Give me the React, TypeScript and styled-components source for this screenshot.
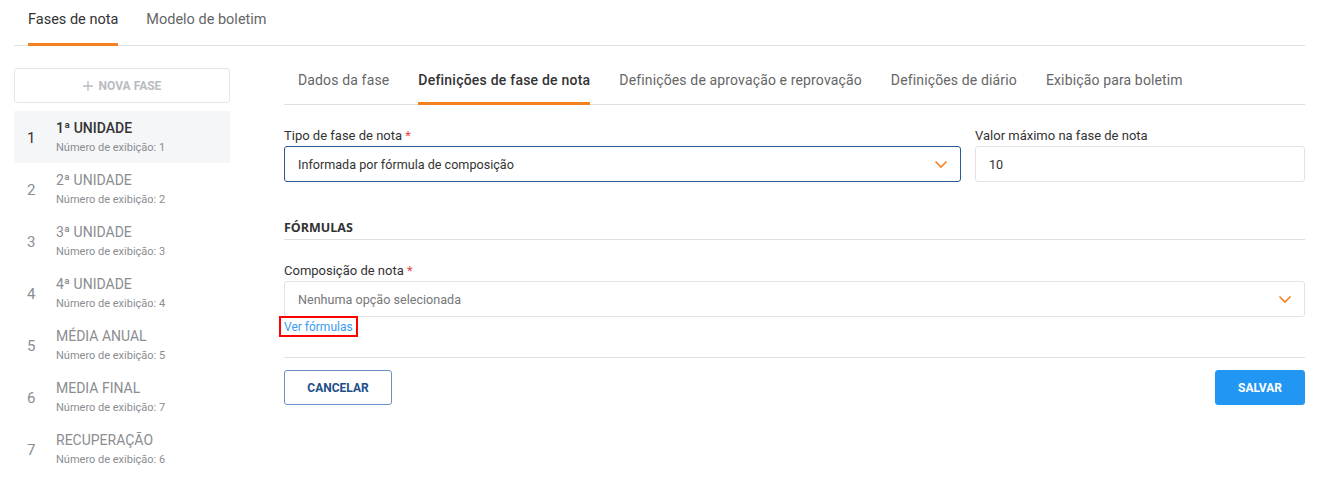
import React from "react";
import styled, { createGlobalStyle } from "styled-components";

const GlobalStyle = createGlobalStyle`
  body {
    margin: 0;
    background: #ffffff;
    font-family: Roboto, "Liberation Sans", sans-serif;
    color: #333333;
  }
  * { box-sizing: border-box; }
`;

const Page = styled.div`
  padding: 0 14px;
  width: 1319px;
`;

const TopTabs = styled.div`
  display: flex;
  border-bottom: 1px solid #e0e0e0;
  height: 46px;
`;

const TopTab = styled.div<{ $active?: boolean }>`
  margin: 0 14px -1px;
  padding-top: 10px;
  font-size: 14.5px;
  line-height: 20px;
  color: ${(p) => (p.$active ? "#333" : "#666")};
  border-bottom: 3px solid ${(p) => (p.$active ? "#f58220" : "transparent")};
`;

const Body = styled.div`
  display: flex;
  gap: 54px;
`;

const Sidebar = styled.div`
  width: 216px;
  padding-top: 22px;
`;

const NewButton = styled.button`
  width: 100%;
  height: 35px;
  border: 1px solid #e3e6ea;
  border-radius: 3px;
  background: #fff;
  color: #b8bcc2;
  font-family: Roboto, "Liberation Sans", sans-serif;
  font-weight: 700;
  font-size: 12px;
  display: flex;
  align-items: center;
  justify-content: center;
  gap: 6px;
  margin-bottom: 8px;
`;

const Item = styled.div<{ $active?: boolean }>`
  height: 52px;
  display: flex;
  background: ${(p) => (p.$active ? "#f5f6f8" : "transparent")};
  color: ${(p) => (p.$active ? "#333" : "#8a8d91")};
`;

const ItemNumber = styled.div`
  width: 42px;
  padding-left: 13px;
  font-size: 15px;
  align-self: center;
  padding-top: 2px;
`;

const ItemText = styled.div`
  display: flex;
  flex-direction: column;
  padding-top: 8px;
`;

const ItemTitle = styled.div<{ $active?: boolean }>`
  font-size: 14px;
  line-height: 18px;
  font-weight: ${(p) => (p.$active ? 500 : 400)};
`;

const ItemSub = styled.div`
  font-size: 11px;
  line-height: 14px;
  margin-top: 4px;
  color: #8a8d91;
`;

const Main = styled.div`
  width: 1021px;
  padding-top: 22px;
`;

const Tabs = styled.div`
  display: flex;
  border-bottom: 1px solid #e0e0e0;
  height: 37px;
`;

const Tab = styled.div<{ $active?: boolean }>`
  margin: 0 14.5px -1px;
  padding-top: 2px;
  font-size: 14px;
  line-height: 20px;
  letter-spacing: ${(p) => (p.$active ? "0.22px" : "0.14px")};
  color: ${(p) => (p.$active ? "#333" : "#666")};
  font-weight: ${(p) => (p.$active ? 500 : 400)};
  border-bottom: 3px solid ${(p) => (p.$active ? "#f58220" : "transparent")};

  &:first-child {
    margin-left: 14px;
  }
`;

const Row = styled.div`
  display: flex;
  gap: 14px;
  margin-top: 23px;
`;

const Field = styled.div<{ $width?: number }>`
  display: flex;
  flex-direction: column;
  width: ${(p) => (p.$width ? `${p.$width}px` : "auto")};
  flex: ${(p) => (p.$width ? "none" : "1")};
`;

const Label = styled.label`
  font-size: 13px;
  line-height: 16px;
  color: #333;
  margin-bottom: 2px;
`;

const Required = styled.span`
  color: #e0474c;
`;

const Box = styled.div<{ $focused?: boolean; $placeholder?: boolean }>`
  height: 36px;
  border: 1px solid ${(p) => (p.$focused ? "#2b5a94" : "#dfe2e6")};
  border-radius: 3px;
  display: flex;
  align-items: center;
  justify-content: space-between;
  padding: 0 12px 0 13px;
  font-size: 12.6px;
  color: ${(p) => (p.$placeholder ? "#777" : "#333")};
`;

const SectionTitle = styled.div`
  margin-top: 38px;
  font-size: 12.5px;
  font-weight: 700;
  font-family: "Open Sans", Roboto, sans-serif;
  color: #333;
  line-height: 16px;
  padding-bottom: 3px;
  border-bottom: 1px solid #e0e0e0;
`;

const FieldBlock = styled.div`
  margin-top: 23px;
  display: flex;
  flex-direction: column;
`;

const Highlight = styled.span`
  align-self: flex-start;
  margin-left: -5px;
  margin-top: -1px;
  border: 2px solid #ff0000;
  padding: 1px 3px;
  line-height: 14px;
`;

const Link = styled.a`
  font-size: 12px;
  color: #3a9bf0;
  text-decoration: none;
`;

const Footer = styled.div`
  margin-top: 20px;
  border-top: 1px solid #e0e0e0;
  padding-top: 12px;
  display: flex;
  justify-content: space-between;
`;

const Button = styled.button<{ $primary?: boolean }>`
  height: 35px;
  border-radius: 3px;
  font-family: Roboto, "Liberation Sans", sans-serif;
  font-weight: 700;
  font-size: 12px;
  padding: 0;
  width: ${(p) => (p.$primary ? "90px" : "108px")};
  background: ${(p) => (p.$primary ? "#2196f3" : "#fff")};
  color: ${(p) => (p.$primary ? "#fff" : "#1d4e89")};
  border: 1px solid ${(p) => (p.$primary ? "#2196f3" : "#6a92c4")};
`;

const Chevron = () => (
  <svg width="14" height="9" viewBox="0 0 14 9" fill="none">
    <path d="M1.5 1.5L7 7L12.5 1.5" stroke="#f58220" strokeWidth="1.6" />
  </svg>
);

const Plus = () => (
  <svg width="10" height="10" viewBox="0 0 10 10">
    <path d="M5 0V10M0 5H10" stroke="#b8bcc2" strokeWidth="1.3" />
  </svg>
);

const phases = [
  { title: "1ª UNIDADE", order: 1 },
  { title: "2ª UNIDADE", order: 2 },
  { title: "3ª UNIDADE", order: 3 },
  { title: "4ª UNIDADE", order: 4 },
  { title: "MÉDIA ANUAL", order: 5 },
  { title: "MEDIA FINAL", order: 7 },
  { title: "RECUPERAÇÃO", order: 6 },
];

const tabs = [
  "Dados da fase",
  "Definições de fase de nota",
  "Definições de aprovação e reprovação",
  "Definições de diário",
  "Exibição para boletim",
];

export default function App() {
  return (
    <Page>
      <GlobalStyle />
      <TopTabs>
        <TopTab $active>Fases de nota</TopTab>
        <TopTab>Modelo de boletim</TopTab>
      </TopTabs>
      <Body>
        <Sidebar>
          <NewButton>
            <Plus />
            NOVA FASE
          </NewButton>
          {phases.map((p, i) => (
            <Item key={p.title} $active={i === 0}>
              <ItemNumber>{i + 1}</ItemNumber>
              <ItemText>
                <ItemTitle $active={i === 0}>{p.title}</ItemTitle>
                <ItemSub>Número de exibição: {p.order}</ItemSub>
              </ItemText>
            </Item>
          ))}
        </Sidebar>
        <Main>
          <Tabs>
            {tabs.map((t, i) => (
              <Tab key={t} $active={i === 1}>
                {t}
              </Tab>
            ))}
          </Tabs>
          <Row>
            <Field $width={677}>
              <Label>
                Tipo de fase de nota <Required>*</Required>
              </Label>
              <Box $focused>
                Informada por fórmula de composição
                <Chevron />
              </Box>
            </Field>
            <Field>
              <Label>Valor máximo na fase de nota</Label>
              <Box>10</Box>
            </Field>
          </Row>
          <SectionTitle>FÓRMULAS</SectionTitle>
          <FieldBlock>
            <Label>
              Composição de nota <Required>*</Required>
            </Label>
            <Box $placeholder>
              Nenhuma opção selecionada
              <Chevron />
            </Box>
            <Highlight>
              <Link href="#">Ver fórmulas</Link>
            </Highlight>
          </FieldBlock>
          <Footer>
            <Button>CANCELAR</Button>
            <Button $primary>SALVAR</Button>
          </Footer>
        </Main>
      </Body>
    </Page>
  );
}
